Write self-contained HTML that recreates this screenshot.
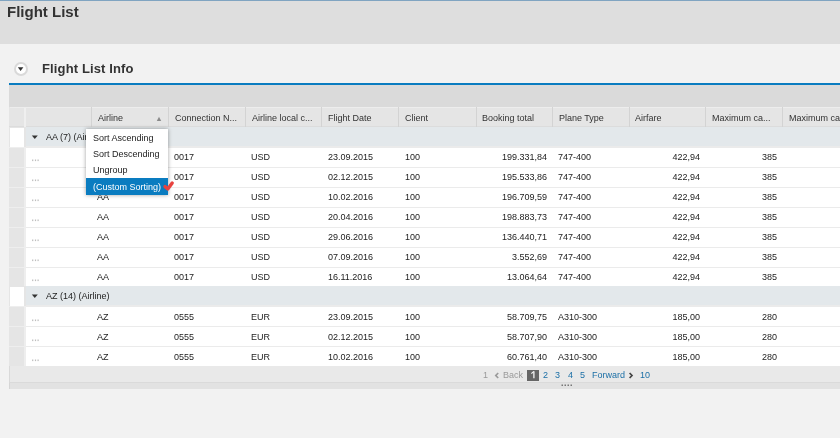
<!DOCTYPE html><html><head><meta charset="utf-8"><style>
*{margin:0;padding:0;box-sizing:border-box}
html,body{width:840px;height:438px;overflow:hidden;background:#f2f2f2;font-family:"Liberation Sans",sans-serif;color:#222}
.abs{position:absolute}
#topline{left:0;top:0;width:840px;height:1px;background:#80a4c1}
#hdr{left:0;top:1px;width:840px;height:43px;background:#dedede}
#title{left:7px;top:3px;font-size:15px;line-height:18px;font-weight:bold;color:#333;white-space:nowrap}
#circ{left:14px;top:61.5px;width:14px;height:14px;border-radius:50%;background:#fff;border:2px solid #d9d9d9}
#sub{color:#333;left:42px;top:61px;letter-spacing:0.13px;font-size:13px;line-height:16px;font-weight:bold;white-space:nowrap}
#bline{left:9px;top:83px;width:831px;height:2px;background:#0a7cc0}
#tb{left:9px;top:85px;width:831px;height:22px;background:#dadada}
#colhdr{left:9px;top:107px;width:831px;height:20px;background:#e5e5e5;border-bottom:1px solid #dcdcdc}
.ch{position:absolute;color:#333;top:107px;height:20px;font-size:9px;line-height:20px;padding-top:1px;padding-left:6px;white-space:nowrap;overflow:hidden;border-left:1px solid #d3d3d3}
.row{position:absolute;left:26px;width:814px;height:20px;background:#fff;border-top:1px solid #ebebeb}
.grp{position:absolute;left:26px;width:814px;height:20px;background:#e3e8eb;border-bottom:1px solid #ebebeb}
.sel{position:absolute;left:9px;width:15px;height:20px;background:#e5e5e5;border-top:1px solid #eeeeee}
.sep{position:absolute;left:24px;width:2px;height:20px;background:#eeeeee}
.c{position:absolute;font-size:9px;line-height:20px;white-space:nowrap;}
.t{display:inline-block;}
.r{text-align:right;transform-origin:100% 0}
#menu{left:86px;top:129px;width:82px;height:66px;background:#fff;box-shadow:0 0 4px rgba(0,0,0,.38)}
.mi{position:absolute;font-size:9px;line-height:16px;white-space:nowrap;}
#mhl{left:86px;top:178px;width:82px;height:17px;background:#0a7cc0}
#foot{left:9px;top:366px;width:831px;height:16px;background:#e9e9e9;border-left:1px solid #d9d9d9}
#rsz{left:9px;top:382px;width:831px;height:7px;background:#e2e2e2;border-left:1px solid #d5d5d5;border-top:1px solid #dadada}
.pg{position:absolute;top:368px;font-size:9px;line-height:14px;white-space:nowrap;color:#1b6fa6;}
#wrap{position:absolute;left:0;top:0;width:840px;height:438px;will-change:transform}
</style></head><body><div id="wrap">
<div class="abs" id="topline"></div>
<div class="abs" id="hdr"></div>
<div class="abs" id="title">Flight List</div>
<div class="abs" id="circ"></div>
<svg class="abs" style="left:17px;top:66px" width="8" height="6"><path d="M0.8,1.2 L6.4,1.2 L3.6,5 Z" fill="#333"/></svg>
<div class="abs" id="sub">Flight List Info</div>
<div class="abs" id="bline"></div>
<div class="abs" id="tb"></div>
<div class="abs" id="colhdr"></div>
<div class="abs" style="left:24px;top:107px;width:2px;height:20px;background:#efefef"></div>
<div class="abs" style="left:10px;top:107px;width:830px;height:1px;background:#ededed"></div>

<div class="ch" style="left:91px;width:77px"><span class="t">Airline</span></div>
<div class="ch" style="left:168px;width:77px"><span class="t">Connection N...</span></div>
<div class="ch" style="left:245px;width:76px"><span class="t">Airline local c...</span></div>
<div class="ch" style="left:321px;width:77px"><span class="t">Flight Date</span></div>
<div class="ch" style="left:398px;width:78px"><span class="t">Client</span></div>
<div class="ch" style="left:476px;width:76px;padding-left:5px"><span class="t">Booking total</span></div>
<div class="ch" style="left:552px;width:77px"><span class="t">Plane Type</span></div>
<div class="ch" style="left:629px;width:76px;padding-left:5px"><span class="t">Airfare</span></div>
<div class="ch" style="left:705px;width:77px"><span class="t">Maximum ca...</span></div>
<div class="ch" style="left:782px;width:78px"><span class="t">Maximum ca</span></div>
<svg class="abs" style="left:155px;top:115px" width="8" height="7"><path d="M1.8,6 L4,1.8 L6.2,6 Z" fill="#8a8a8a"/></svg>
<div class="abs" style="left:9px;top:127px;width:17px;height:21px;background:#e5e5e5"></div>
<div class="abs" style="left:10px;top:128px;width:14px;height:19px;background:#fff"></div>
<div class="grp" style="top:127px"></div>
<svg class="abs" style="left:31px;top:134px" width="8" height="6"><path d="M0.8,1.4 L6.8,1.4 L3.8,5.1 Z" fill="#333"/></svg>
<div class="c" style="left:46px;top:127px">AA (7) (Airline)</div>
<div class="sel" style="top:147px"></div><div class="sep" style="top:147px"></div>
<div class="row" style="top:147px"></div>
<svg class="abs" style="left:31px;top:159px" width="9" height="5"><g fill="#bdbdbd"><rect x="1.1" y="0.5" width="1.2" height="1.6"/><rect x="3.9" y="0.5" width="1.2" height="1.6"/><rect x="6.5" y="0.5" width="1.2" height="1.6"/></g></svg>
<div class="c" style="left:97px;top:147px">AA</div>
<div class="c" style="left:174px;top:147px">0017</div>
<div class="c" style="left:251px;top:147px">USD</div>
<div class="c" style="left:328px;top:147px">23.09.2015</div>
<div class="c" style="left:405px;top:147px">100</div>
<div class="c r" style="left:476px;width:71px;top:147px">199.331,84</div>
<div class="c" style="left:558px;top:147px">747-400</div>
<div class="c r" style="left:629px;width:71px;top:147px">422,94</div>
<div class="c r" style="left:705px;width:72px;top:147px">385</div>
<div class="sel" style="top:167px"></div><div class="sep" style="top:167px"></div>
<div class="row" style="top:167px"></div>
<svg class="abs" style="left:31px;top:179px" width="9" height="5"><g fill="#bdbdbd"><rect x="1.1" y="0.5" width="1.2" height="1.6"/><rect x="3.9" y="0.5" width="1.2" height="1.6"/><rect x="6.5" y="0.5" width="1.2" height="1.6"/></g></svg>
<div class="c" style="left:97px;top:167px">AA</div>
<div class="c" style="left:174px;top:167px">0017</div>
<div class="c" style="left:251px;top:167px">USD</div>
<div class="c" style="left:328px;top:167px">02.12.2015</div>
<div class="c" style="left:405px;top:167px">100</div>
<div class="c r" style="left:476px;width:71px;top:167px">195.533,86</div>
<div class="c" style="left:558px;top:167px">747-400</div>
<div class="c r" style="left:629px;width:71px;top:167px">422,94</div>
<div class="c r" style="left:705px;width:72px;top:167px">385</div>
<div class="sel" style="top:187px"></div><div class="sep" style="top:187px"></div>
<div class="row" style="top:187px"></div>
<svg class="abs" style="left:31px;top:199px" width="9" height="5"><g fill="#bdbdbd"><rect x="1.1" y="0.5" width="1.2" height="1.6"/><rect x="3.9" y="0.5" width="1.2" height="1.6"/><rect x="6.5" y="0.5" width="1.2" height="1.6"/></g></svg>
<div class="c" style="left:97px;top:187px">AA</div>
<div class="c" style="left:174px;top:187px">0017</div>
<div class="c" style="left:251px;top:187px">USD</div>
<div class="c" style="left:328px;top:187px">10.02.2016</div>
<div class="c" style="left:405px;top:187px">100</div>
<div class="c r" style="left:476px;width:71px;top:187px">196.709,59</div>
<div class="c" style="left:558px;top:187px">747-400</div>
<div class="c r" style="left:629px;width:71px;top:187px">422,94</div>
<div class="c r" style="left:705px;width:72px;top:187px">385</div>
<div class="sel" style="top:207px"></div><div class="sep" style="top:207px"></div>
<div class="row" style="top:207px"></div>
<svg class="abs" style="left:31px;top:219px" width="9" height="5"><g fill="#bdbdbd"><rect x="1.1" y="0.5" width="1.2" height="1.6"/><rect x="3.9" y="0.5" width="1.2" height="1.6"/><rect x="6.5" y="0.5" width="1.2" height="1.6"/></g></svg>
<div class="c" style="left:97px;top:207px">AA</div>
<div class="c" style="left:174px;top:207px">0017</div>
<div class="c" style="left:251px;top:207px">USD</div>
<div class="c" style="left:328px;top:207px">20.04.2016</div>
<div class="c" style="left:405px;top:207px">100</div>
<div class="c r" style="left:476px;width:71px;top:207px">198.883,73</div>
<div class="c" style="left:558px;top:207px">747-400</div>
<div class="c r" style="left:629px;width:71px;top:207px">422,94</div>
<div class="c r" style="left:705px;width:72px;top:207px">385</div>
<div class="sel" style="top:227px"></div><div class="sep" style="top:227px"></div>
<div class="row" style="top:227px"></div>
<svg class="abs" style="left:31px;top:239px" width="9" height="5"><g fill="#bdbdbd"><rect x="1.1" y="0.5" width="1.2" height="1.6"/><rect x="3.9" y="0.5" width="1.2" height="1.6"/><rect x="6.5" y="0.5" width="1.2" height="1.6"/></g></svg>
<div class="c" style="left:97px;top:227px">AA</div>
<div class="c" style="left:174px;top:227px">0017</div>
<div class="c" style="left:251px;top:227px">USD</div>
<div class="c" style="left:328px;top:227px">29.06.2016</div>
<div class="c" style="left:405px;top:227px">100</div>
<div class="c r" style="left:476px;width:71px;top:227px">136.440,71</div>
<div class="c" style="left:558px;top:227px">747-400</div>
<div class="c r" style="left:629px;width:71px;top:227px">422,94</div>
<div class="c r" style="left:705px;width:72px;top:227px">385</div>
<div class="sel" style="top:247px"></div><div class="sep" style="top:247px"></div>
<div class="row" style="top:247px"></div>
<svg class="abs" style="left:31px;top:259px" width="9" height="5"><g fill="#bdbdbd"><rect x="1.1" y="0.5" width="1.2" height="1.6"/><rect x="3.9" y="0.5" width="1.2" height="1.6"/><rect x="6.5" y="0.5" width="1.2" height="1.6"/></g></svg>
<div class="c" style="left:97px;top:247px">AA</div>
<div class="c" style="left:174px;top:247px">0017</div>
<div class="c" style="left:251px;top:247px">USD</div>
<div class="c" style="left:328px;top:247px">07.09.2016</div>
<div class="c" style="left:405px;top:247px">100</div>
<div class="c r" style="left:476px;width:71px;top:247px">3.552,69</div>
<div class="c" style="left:558px;top:247px">747-400</div>
<div class="c r" style="left:629px;width:71px;top:247px">422,94</div>
<div class="c r" style="left:705px;width:72px;top:247px">385</div>
<div class="sel" style="top:267px"></div><div class="sep" style="top:267px"></div>
<div class="row" style="top:267px"></div>
<svg class="abs" style="left:31px;top:279px" width="9" height="5"><g fill="#bdbdbd"><rect x="1.1" y="0.5" width="1.2" height="1.6"/><rect x="3.9" y="0.5" width="1.2" height="1.6"/><rect x="6.5" y="0.5" width="1.2" height="1.6"/></g></svg>
<div class="c" style="left:97px;top:267px">AA</div>
<div class="c" style="left:174px;top:267px">0017</div>
<div class="c" style="left:251px;top:267px">USD</div>
<div class="c" style="left:328px;top:267px">16.11.2016</div>
<div class="c" style="left:405px;top:267px">100</div>
<div class="c r" style="left:476px;width:71px;top:267px">13.064,64</div>
<div class="c" style="left:558px;top:267px">747-400</div>
<div class="c r" style="left:629px;width:71px;top:267px">422,94</div>
<div class="c r" style="left:705px;width:72px;top:267px">385</div>
<div class="abs" style="left:9px;top:286px;width:17px;height:21px;background:#e5e5e5"></div>
<div class="abs" style="left:10px;top:287px;width:14px;height:19px;background:#fff"></div>
<div class="grp" style="top:286px"></div>
<svg class="abs" style="left:31px;top:293px" width="8" height="6"><path d="M0.8,1.4 L6.8,1.4 L3.8,5.1 Z" fill="#333"/></svg>
<div class="c" style="left:46px;top:286px">AZ (14) (Airline)</div>
<div class="sel" style="top:306px"></div><div class="sep" style="top:306px"></div>
<div class="row" style="top:306px"></div>
<svg class="abs" style="left:31px;top:319px" width="9" height="5"><g fill="#bdbdbd"><rect x="1.1" y="0.5" width="1.2" height="1.6"/><rect x="3.9" y="0.5" width="1.2" height="1.6"/><rect x="6.5" y="0.5" width="1.2" height="1.6"/></g></svg>
<div class="c" style="left:97px;top:307px">AZ</div>
<div class="c" style="left:174px;top:307px">0555</div>
<div class="c" style="left:251px;top:307px">EUR</div>
<div class="c" style="left:328px;top:307px">23.09.2015</div>
<div class="c" style="left:405px;top:307px">100</div>
<div class="c r" style="left:476px;width:71px;top:307px">58.709,75</div>
<div class="c" style="left:558px;top:307px">A310-300</div>
<div class="c r" style="left:629px;width:71px;top:307px">185,00</div>
<div class="c r" style="left:705px;width:72px;top:307px">280</div>
<div class="sel" style="top:326px"></div><div class="sep" style="top:326px"></div>
<div class="row" style="top:326px"></div>
<svg class="abs" style="left:31px;top:339px" width="9" height="5"><g fill="#bdbdbd"><rect x="1.1" y="0.5" width="1.2" height="1.6"/><rect x="3.9" y="0.5" width="1.2" height="1.6"/><rect x="6.5" y="0.5" width="1.2" height="1.6"/></g></svg>
<div class="c" style="left:97px;top:327px">AZ</div>
<div class="c" style="left:174px;top:327px">0555</div>
<div class="c" style="left:251px;top:327px">EUR</div>
<div class="c" style="left:328px;top:327px">02.12.2015</div>
<div class="c" style="left:405px;top:327px">100</div>
<div class="c r" style="left:476px;width:71px;top:327px">58.707,90</div>
<div class="c" style="left:558px;top:327px">A310-300</div>
<div class="c r" style="left:629px;width:71px;top:327px">185,00</div>
<div class="c r" style="left:705px;width:72px;top:327px">280</div>
<div class="sel" style="top:346px"></div><div class="sep" style="top:346px"></div>
<div class="row" style="top:346px"></div>
<svg class="abs" style="left:31px;top:359px" width="9" height="5"><g fill="#bdbdbd"><rect x="1.1" y="0.5" width="1.2" height="1.6"/><rect x="3.9" y="0.5" width="1.2" height="1.6"/><rect x="6.5" y="0.5" width="1.2" height="1.6"/></g></svg>
<div class="c" style="left:97px;top:347px">AZ</div>
<div class="c" style="left:174px;top:347px">0555</div>
<div class="c" style="left:251px;top:347px">EUR</div>
<div class="c" style="left:328px;top:347px">10.02.2016</div>
<div class="c" style="left:405px;top:347px">100</div>
<div class="c r" style="left:476px;width:71px;top:347px">60.761,40</div>
<div class="c" style="left:558px;top:347px">A310-300</div>
<div class="c r" style="left:629px;width:71px;top:347px">185,00</div>
<div class="c r" style="left:705px;width:72px;top:347px">280</div>
<div class="abs" id="foot"></div>
<div class="abs" id="rsz"></div>
<div class="pg" style="left:483px;color:#9a9a9a">1</div>
<svg class="abs" style="left:494px;top:372px" width="6" height="7"><path d="M4.2,1 L1.8,3.5 L4.2,6" fill="none" stroke="#9a9a9a" stroke-width="1.7"/></svg>
<div class="pg" style="left:503px;color:#9a9a9a">Back</div>
<svg class="abs" style="left:527px;top:370px" width="12" height="11"><rect width="12" height="11" fill="#666"/><path d="M6.9,1.3 L6.9,8.2" stroke="#fff" stroke-width="1.2"/><path d="M6.6,1.6 Q5.8,3 4.3,3.6" stroke="#fff" stroke-width="1.1" fill="none"/></svg>
<div class="pg" style="left:543px">2</div>
<div class="pg" style="left:555px">3</div>
<div class="pg" style="left:568px">4</div>
<div class="pg" style="left:580px">5</div>
<div class="pg" style="left:592px">Forward</div>
<svg class="abs" style="left:628px;top:372px" width="6" height="7"><path d="M1.6,1 L4,3.5 L1.6,6" fill="none" stroke="#444" stroke-width="1.7"/></svg>
<div class="pg" style="left:640px">10</div>
<svg class="abs" style="left:561px;top:384px" width="12" height="3"><g fill="#777"><rect x="0.5" y="0.5" width="1.5" height="1.5"/><rect x="3.5" y="0.5" width="1.5" height="1.5"/><rect x="6.5" y="0.5" width="1.5" height="1.5"/><rect x="9.5" y="0.5" width="1.5" height="1.5"/></g></svg>
<div class="abs" id="menu"></div>
<div class="abs" id="mhl"></div>
<div class="mi" style="left:93px;top:130px">Sort Ascending</div>
<div class="mi" style="left:93px;top:146px">Sort Descending</div>
<div class="mi" style="left:93px;top:162px">Ungroup</div>
<div class="mi" style="left:93px;top:179px;color:#fff">(Custom Sorting)</div>
<svg class="abs" style="left:160px;top:179px" width="16" height="14"><path d="M5,7.6 L7.8,9.9 L12.2,4" fill="none" stroke="#e8433f" stroke-width="3.4" stroke-linecap="round" stroke-linejoin="round"/></svg>
</div></body></html>
